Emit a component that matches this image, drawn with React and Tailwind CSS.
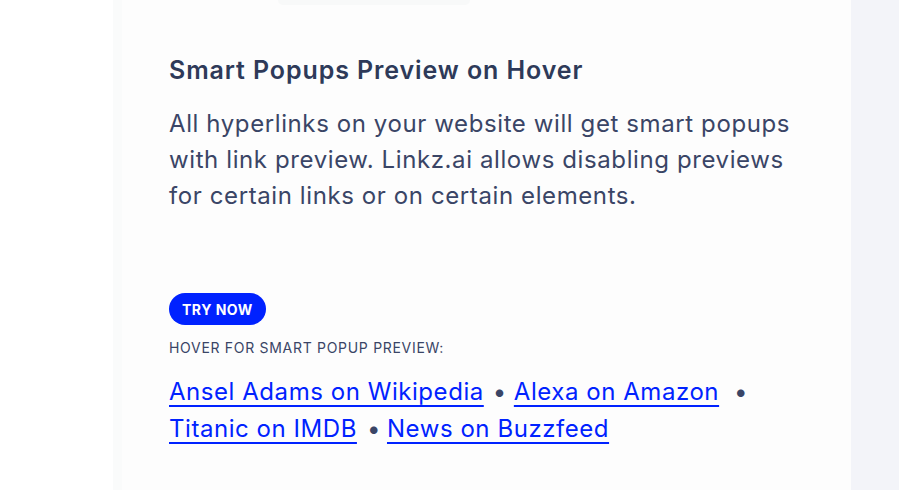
export default function App() {
  const link = "text-[#0022ff] underline underline-offset-[5px] decoration-[2px]";
  return (
    <div className="flex h-[490px] w-full overflow-hidden bg-white" style={{ fontFamily: "Inter, 'Noto Sans', sans-serif" }}>
      <div className="w-[113px] shrink-0 bg-white" />
      <div className="flex flex-1 bg-[#fdfdfd]">
        <div className="w-[9px] shrink-0 bg-[#fafbfb]" />
        <div className="flex-1">
          <div className="ml-[156px] h-[5px] w-[192px] rounded-b-[14px] bg-[#f8f9f9]" />
          <div className="pl-[47px] pr-[20px]">
            <h2 className="mt-[48px] whitespace-nowrap text-[25px] font-semibold leading-[34px] tracking-[0.9px] text-[#2e3a59]">
              Smart Popups Preview on Hover
            </h2>
            <p className="mt-[19px] whitespace-nowrap text-[24px] leading-[36px] tracking-[0.6px] text-[#3a4566]">
              All hyperlinks on your website will get smart popups
              <br />
              with link preview. Linkz.ai allows disabling previews
              <br />
              for certain links or on certain elements.
            </p>
            <div className="mt-[79px]">
              <button className="h-[32px] rounded-full bg-[#0022ff] px-[13px] text-[14px] font-bold tracking-[0.5px] text-white">
                TRY NOW
              </button>
            </div>
            <div className="mt-[14px] text-[14px] leading-[18px] tracking-[0.7px] text-[#3a4566]">HOVER FOR SMART POPUP PREVIEW:</div>
            <div className="mt-[16px] whitespace-nowrap text-[24px] leading-[37px] tracking-[0.55px] text-[#3a4566]">
              <a href="#" className={link}>Ansel Adams on Wikipedia</a>
              <span className="ml-[9px] mr-[7px]">•</span>
              <a href="#" className={link}>Alexa on Amazon</a>
              <span className="ml-[15px]">•</span>
              <br />
              <a href="#" className={link}>Titanic on IMDB</a>
              <span className="ml-[10px] mr-[6px]">•</span>
              <a href="#" className={link}>News on Buzzfeed</a>
            </div>
          </div>
        </div>
      </div>
      <div className="w-[48px] shrink-0 bg-[#f3f4f9]" />
    </div>
  );
}
